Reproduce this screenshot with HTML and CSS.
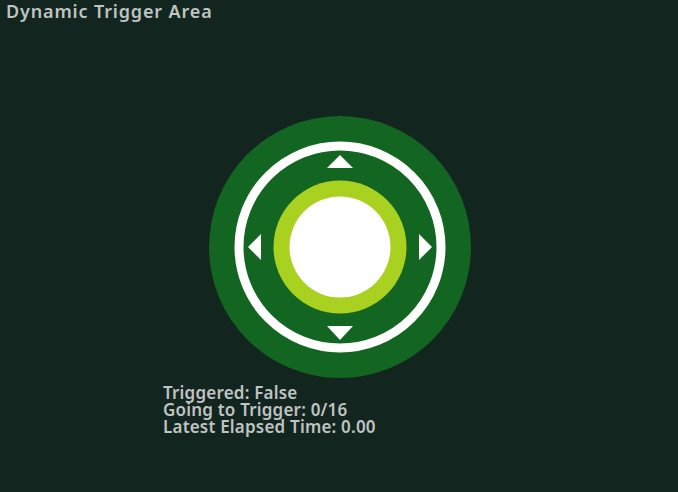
FILE: index.html
```html
<!DOCTYPE html>
<html>
<head>
<meta charset="utf-8">
<link rel="stylesheet" href="styles.css">
</head>
<body>
<div class="screen">
  <h1 class="title">Dynamic Trigger Area</h1>
  <div class="stage">
    <svg class="stick" width="262" height="262" viewBox="0 0 262 262">
      <circle cx="131" cy="131" r="131" fill="#136621"/>
      <circle cx="131" cy="131" r="101" fill="none" stroke="#ffffff" stroke-width="9"/>
      <circle cx="131" cy="131" r="66.5" fill="#a9d11f"/>
      <circle cx="131" cy="131" r="50.5" fill="#ffffff"/>
      <polygon points="131,39 118,52 144,52" fill="#ffffff"/>
      <polygon points="118,210 144,210 131,224" fill="#ffffff"/>
      <polygon points="39,131 52,118 52,144" fill="#ffffff"/>
      <polygon points="223,131 210,118 210,144" fill="#ffffff"/>
    </svg>
  </div>
  <div class="stats">
    <div>Triggered: False</div>
    <div>Going to Trigger: 0/16</div>
    <div>Latest Elapsed Time: 0.00</div>
  </div>
</div>
</body>
</html>
```
FILE: styles.css
```css
html, body {
  margin: 0;
  padding: 0;
  background: #13251f;
}
.screen {
  width: 678px;
  height: 492px;
  background: #13251f;
  font-family: "Noto Sans", "Open Sans", sans-serif;
  font-weight: 600;
  font-size: 17px;
  color: #bfc3c1;
  overflow: hidden;
}
.title {
  margin: 0;
  padding: 0 0 0 6px;
  font-size: 18px;
  font-weight: 600;
  letter-spacing: 0.85px;
  line-height: 22px;
}
.stage {
  padding: 94px 0 0 209px;
  height: 262px;
}
.stick {
  display: block;
}
.stats {
  padding: 6px 0 0 163px;
  letter-spacing: 0.2px;
  line-height: 17px;
}
```
